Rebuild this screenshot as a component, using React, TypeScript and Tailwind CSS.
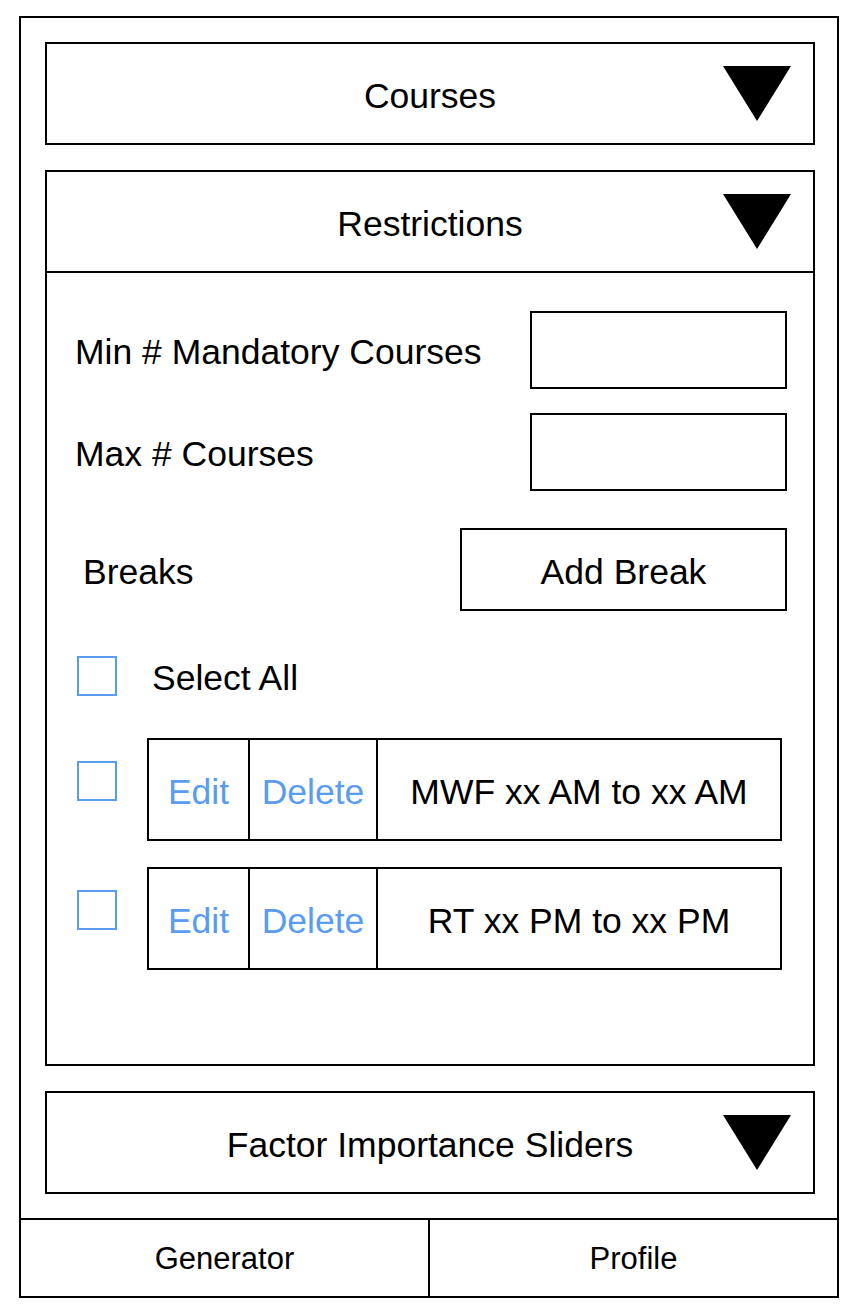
const font = { fontFamily: '"Liberation Sans", Arial, sans-serif' };

function Triangle() {
  return (
    <svg width="68" height="55" viewBox="0 0 68 55" className="block">
      <polygon points="0,0 68,0 34,55" fill="#000" />
    </svg>
  );
}

function SectionHeader({ title, className = "" }: { title: string; className?: string }) {
  return (
    <div className={`grid grid-cols-[1fr_auto_1fr] items-center h-[99px] ${className}`}>
      <div />
      <span className="text-[35.5px] leading-none text-black pt-[6px]">{title}</span>
      <div className="flex justify-end pr-[22px]">
        <Triangle />
      </div>
    </div>
  );
}

function Checkbox() {
  return <div className="w-[40px] h-[40px] border-2 border-[#5a9cf0] bg-white shrink-0" />;
}

function BreakRow({ label }: { label: string }) {
  return (
    <div className="flex items-start">
      <div className="pt-[23px] w-[70px] shrink-0">
        <Checkbox />
      </div>
      <div className="flex w-[635px] h-[103px] border-2 border-black text-[35.5px] leading-none">
        <div className="w-[101px] pt-[6px] border-r-2 border-black flex items-center justify-center text-[#5a9cf0]">
          Edit
        </div>
        <div className="w-[128px] pt-[6px] border-r-2 border-black flex items-center justify-center text-[#5a9cf0]">
          Delete
        </div>
        <div className="flex-1 pt-[6px] flex items-center justify-center text-black">{label}</div>
      </div>
    </div>
  );
}

export default function App() {
  return (
    <div className="w-[862px] h-[1316px] bg-white pt-[16px] pl-[19px]" style={font}>
      <div className="w-[820px] h-[1282px] border-2 border-black flex flex-col">
        <div className="flex-1 flex flex-col pl-[24px] pr-[22px] pt-[24px] gap-[25px]">
          {/* Courses */}
          <div className="border-2 border-black h-[103px]">
            <SectionHeader title="Courses" />
          </div>

          {/* Restrictions */}
          <div className="border-2 border-black h-[896px] flex flex-col">
            <SectionHeader title="Restrictions" className="border-b-2 border-black h-[101px]" />
            <div className="flex flex-col pl-[28px] pr-[26px]">
              <div className="flex items-center justify-between mt-[38px] h-[78px]">
                <span className="text-[35.5px] leading-none pt-[6px]">Min # Mandatory Courses</span>
                <div className="w-[257px] h-[78px] border-2 border-black" />
              </div>
              <div className="flex items-center justify-between mt-[24px] h-[78px]">
                <span className="text-[35.5px] leading-none pt-[6px]">Max # Courses</span>
                <div className="w-[257px] h-[78px] border-2 border-black" />
              </div>
              <div className="flex items-center justify-between mt-[37px] h-[83px]">
                <span className="text-[35.5px] leading-none pl-[8px] pt-[6px]">Breaks</span>
                <div className="w-[327px] h-[83px] pt-[6px] border-2 border-black flex items-center justify-center text-[35.5px] leading-none">
                  Add Break
                </div>
              </div>
              <div className="flex items-center mt-[45px] h-[40px] pl-[2px]">
                <div className="w-[75px] shrink-0">
                  <Checkbox />
                </div>
                <span className="text-[35.5px] leading-none pt-[6px]">Select All</span>
              </div>
              <div className="flex flex-col gap-[26px] mt-[42px] pl-[2px]">
                <BreakRow label="MWF xx AM to xx AM" />
                <BreakRow label="RT xx PM to xx PM" />
              </div>
            </div>
          </div>

          {/* Factor Importance Sliders */}
          <div className="border-2 border-black h-[103px]">
            <SectionHeader title="Factor Importance Sliders" />
          </div>
        </div>

        {/* Tab bar */}
        <div className="flex h-[78px] border-t-2 border-black text-[31px] leading-none">
          <div className="flex-1 flex items-center justify-center border-r-2 border-black">Generator</div>
          <div className="flex-1 flex items-center justify-center">Profile</div>
        </div>
      </div>
    </div>
  );
}
